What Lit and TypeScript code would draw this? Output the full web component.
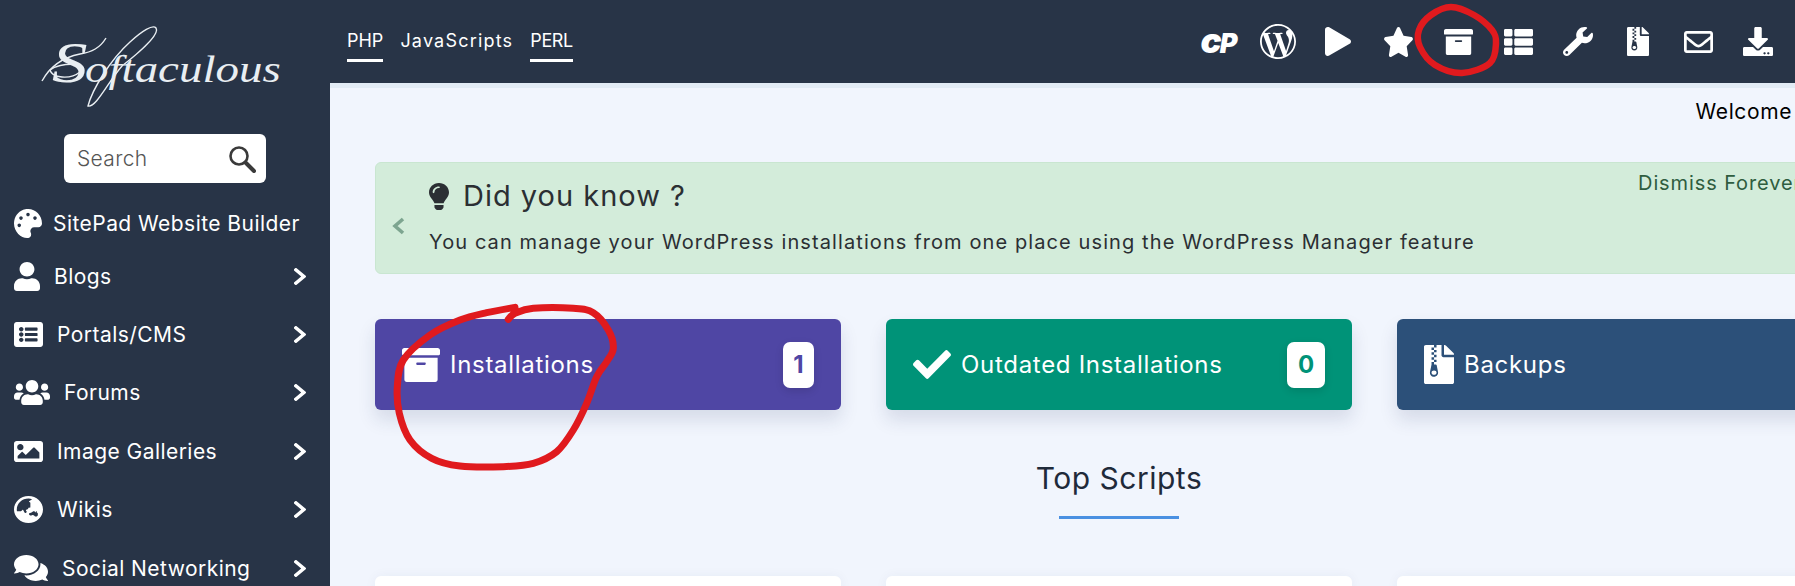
import { LitElement, html, css, svg } from "lit";
import { customElement } from "lit/decorators.js";

const P = {
  star: ["0 0 576 512", "M259.3 17.8L194 150.2 47.9 171.5c-26.2 3.8-36.7 36.1-17.7 54.6l105.7 103-25 145.5c-4.5 26.3 23.2 46 46.4 33.7L288 439.6l130.7 68.7c23.2 12.2 50.9-7.4 46.4-33.7l-25-145.5 105.7-103c19-18.5 8.5-50.8-17.7-54.6L382 150.2 316.7 17.8c-11.7-23.6-45.6-23.9-57.4 0z"],
  play: ["0 0 448 512", "M424.4 214.7L72.4 6.6C43.8-10.3 0 6.1 0 47.9V464c0 37.5 40.7 60.1 72.4 41.3l352-208c31.4-18.5 31.5-64.1 0-82.6z"],
  archive: ["0 32 512 448", "M32 448c0 17.7 14.3 32 32 32h384c17.7 0 32-14.3 32-32V160H32v288zm160-212c0-6.6 5.4-12 12-12h104c6.6 0 12 5.4 12 12v8c0 6.6-5.4 12-12 12H204c-6.6 0-12-5.4-12-12v-8zM480 32H32C14.3 32 0 46.3 0 64v48c0 8.8 7.2 16 16 16h480c8.8 0 16-7.2 16-16V64c0-17.7-14.3-32-32-32z"],
  thlist: ["0 32 512 448", "M149.333 216v80c0 13.255-10.745 24-24 24H24c-13.255 0-24-10.745-24-24v-80c0-13.255 10.745-24 24-24h101.333c13.255 0 24 10.745 24 24zM0 376v80c0 13.255 10.745 24 24 24h101.333c13.255 0 24-10.745 24-24v-80c0-13.255-10.745-24-24-24H24c-13.255 0-24 10.745-24 24zM125.333 32H24C10.745 32 0 42.745 0 56v80c0 13.255 10.745 24 24 24h101.333c13.255 0 24-10.745 24-24V56c0-13.255-10.745-24-24-24zm80 448H488c13.255 0 24-10.745 24-24v-80c0-13.255-10.745-24-24-24H205.333c-13.255 0-24 10.745-24 24v80c0 13.255 10.745 24 24 24zm-24-424v80c0 13.255 10.745 24 24 24H488c13.255 0 24-10.745 24-24V56c0-13.255-10.745-24-24-24H205.333c-13.255 0-24 10.745-24 24zm24 264H488c13.255 0 24-10.745 24-24v-80c0-13.255-10.745-24-24-24H205.333c-13.255 0-24 10.745-24 24v80c0 13.255 10.745 24 24 24z"],
  wrench: ["0 0 512 512", "M507.73 109.1c-2.24-9.03-13.54-12.09-20.12-5.51l-74.36 74.36-67.88-11.31-11.31-67.88 74.36-74.36c6.62-6.62 3.43-17.9-5.66-20.16-47.38-11.74-99.55.91-136.58 37.93-39.64 39.64-50.55 97.1-34.05 147.2L18.74 402.76c-24.99 24.99-24.99 65.51 0 90.5 24.99 24.99 65.51 24.99 90.5 0l213.21-213.21c50.12 16.71 107.47 5.68 147.37-34.22 37.07-37.07 49.7-89.32 37.91-136.73zM64 472c-13.25 0-24-10.75-24-24 0-13.26 10.75-24 24-24s24 10.74 24 24c0 13.25-10.75 24-24 24z"],
  envelope: ["0 64 512 384", "M464 64H48C21.49 64 0 85.49 0 112v288c0 26.51 21.49 48 48 48h416c26.51 0 48-21.49 48-48V112c0-26.51-21.49-48-48-48zm0 48v40.805c-22.422 18.259-58.168 46.651-134.587 106.49-16.841 13.247-50.201 45.072-73.413 44.701-23.208.375-56.579-31.459-73.413-44.701C106.18 199.465 70.425 171.067 48 152.805V112h416zM48 400V214.398c22.914 18.251 55.409 43.862 104.938 82.646 21.857 17.205 60.134 55.186 103.062 54.955 42.717.231 80.509-37.199 103.053-54.947 49.528-38.783 82.032-64.401 104.947-82.653V400H48z"],
  download: ["0 0 512 512", "M216 0h80c13.3 0 24 10.7 24 24v168h87.7c17.8 0 26.7 21.5 14.1 34.1L269.7 378.3c-7.5 7.5-19.8 7.5-27.3 0L90.1 226.1c-12.6-12.6-3.7-34.1 14.1-34.1H192V24c0-13.3 10.7-24 24-24zm296 376v112c0 13.3-10.7 24-24 24H24c-13.3 0-24-10.7-24-24V376c0-13.3 10.7-24 24-24h146.7l49 49c20.1 20.1 52.5 20.1 72.6 0l49-49H488c13.3 0 24 10.7 24 24zm-124 88c0-11-9-20-20-20s-20 9-20 20 9 20 20 20 20-9 20-20zm64 0c0-11-9-20-20-20s-20 9-20 20 9 20 20 20 20-9 20-20z"],
  check: ["0 64 512 384", "M173.898 439.404l-166.4-166.4c-9.997-9.997-9.997-26.206 0-36.204l36.203-36.204c9.997-9.998 26.207-9.998 36.204 0L192 312.69 432.095 72.596c9.997-9.997 26.207-9.997 36.204 0l36.203 36.204c9.997 9.997 9.997 26.206 0 36.204l-294.4 294.401c-9.998 9.997-26.207 9.997-36.204-.001z"],
  zip: ["0 0 384 512", "M377 105L279.1 7c-4.5-4.5-10.6-7-17-7H256v128h128v-6.1c0-6.3-2.5-12.4-7-16.9zM128.4 336c-17.9 0-32.4 12.1-32.4 27 0 15 14.6 27 32.5 27s32.4-12.1 32.4-27-14.6-27-32.5-27zM224 136V0h-63.6v32h-32V0H24C10.7 0 0 10.7 0 24v464c0 13.3 10.7 24 24 24h336c13.3 0 24-10.7 24-24V160H248c-13.2 0-24-10.8-24-24zM95.9 32h32v32h-32zm32.3 384c-33.2 0-58-30.4-51.4-62.9L96.4 256v-32h32v-32h-32v-32h32v-32h-32V96h32V64h32v32h-32v32h32v32h-32v32h32v32h-32v32h22.1c5.7 0 10.7 4.1 11.8 9.7l17.3 87.7c6.4 32.4-18.4 62.6-51.4 62.6z"],
  user: ["0 0 448 512", "M224 256c70.7 0 128-57.3 128-128S294.7 0 224 0 96 57.3 96 128s57.3 128 128 128zm89.6 32h-16.7c-22.2 10.2-46.9 16-72.9 16s-50.6-5.8-72.9-16h-16.7C60.2 288 0 348.2 0 422.4V464c0 26.5 21.5 48 48 48h352c26.5 0 48-21.5 48-48v-41.6c0-74.2-60.2-134.4-134.4-134.4z"],
  listalt: ["0 32 512 448", "M464 480H48c-26.51 0-48-21.49-48-48V80c0-26.51 21.49-48 48-48h416c26.51 0 48 21.49 48 48v352c0 26.51-21.49 48-48 48zM128 120c-22.091 0-40 17.909-40 40s17.909 40 40 40 40-17.909 40-40-17.909-40-40-40zm0 96c-22.091 0-40 17.909-40 40s17.909 40 40 40 40-17.909 40-40-17.909-40-40-40zm0 96c-22.091 0-40 17.909-40 40s17.909 40 40 40 40-17.909 40-40-17.909-40-40-40zm288-136v-32c0-6.627-5.373-12-12-12H204c-6.627 0-12 5.373-12 12v32c0 6.627 5.373 12 12 12h200c6.627 0 12-5.373 12-12zm0 96v-32c0-6.627-5.373-12-12-12H204c-6.627 0-12 5.373-12 12v32c0 6.627 5.373 12 12 12h200c6.627 0 12-5.373 12-12zm0 96v-32c0-6.627-5.373-12-12-12H204c-6.627 0-12 5.373-12 12v32c0 6.627 5.373 12 12 12h200c6.627 0 12-5.373 12-12z"],
  users: ["0 32 640 448", "M96 224c35.3 0 64-28.7 64-64s-28.7-64-64-64-64 28.7-64 64 28.7 64 64 64zm448 0c35.3 0 64-28.7 64-64s-28.7-64-64-64-64 28.7-64 64 28.7 64 64 64zm32 32h-64c-17.6 0-33.5 7.1-45.1 18.6 40.3 22.1 68.9 62 75.1 109.4h66c17.7 0 32-14.3 32-32v-32c0-35.3-28.7-64-64-64zm-256 0c61.9 0 112-50.1 112-112S381.9 32 320 32 208 82.1 208 144s50.1 112 112 112zm76.8 32h-8.3c-20.8 10-43.9 16-68.5 16s-47.6-6-68.5-16h-8.3C179.6 288 128 339.6 128 403.2V432c0 26.5 21.5 48 48 48h288c26.5 0 48-21.5 48-48v-28.8c0-63.6-51.6-115.2-115.2-115.2zm-223.7-13.4C161.5 263.1 145.6 256 128 256H64c-35.3 0-64 28.7-64 64v32c0 17.7 14.3 32 32 32h65.9c6.3-47.4 34.9-87.3 75.2-109.4z"],
  image: ["0 64 512 384", "M464 448H48c-26.51 0-48-21.49-48-48V112c0-26.51 21.49-48 48-48h416c26.51 0 48 21.49 48 48v288c0 26.51-21.49 48-48 48zM112 120c-30.928 0-56 25.072-56 56s25.072 56 56 56 56-25.072 56-56-25.072-56-56-56zM64 384h384V272l-87.515-87.515c-4.686-4.686-12.284-4.686-16.971 0L208 320l-55.515-55.515c-4.686-4.686-12.284-4.686-16.971 0L64 336v48z"],
  globe: ["0 8 496 496", "M248 8C111.03 8 0 119.03 0 256s111.03 248 248 248 248-111.03 248-248S384.97 8 248 8zm-11.34 240.23c-2.89 4.82-8.1 7.77-13.72 7.77h-.31c-4.24 0-8.31 1.69-11.31 4.69l-5.66 5.66c-3.12 3.12-3.12 8.19 0 11.31l5.66 5.66c3 3 4.69 7.07 4.69 11.31V304c0 8.84-7.16 16-16 16h-6.11c-6.06 0-11.6-3.42-14.31-8.85l-22.62-45.23c-2.44-4.88-8.95-5.94-12.81-2.08l-19.47 19.46c-3 3-7.07 4.69-11.31 4.69H50.81C49.12 277.55 48 266.92 48 256c0-110.28 89.72-200 200-200 21.51 0 42.2 3.51 61.63 9.82l-50.16 38.53c-5.11 3.41-4.63 11.06.86 13.81l10.83 5.41c5.42 2.71 8.84 8.25 8.84 14.31V216c0 4.42-3.58 8-8 8h-3.06c-3.03 0-5.8-1.71-7.15-4.42-1.56-3.12-5.96-3.29-7.76-.3l-17.37 28.95zM408 358.43c0 4.24-1.69 8.31-4.69 11.31l-9.57 9.57c-3 3-7.07 4.69-11.31 4.69h-15.16c-4.24 0-8.31-1.69-11.31-4.69l-13.01-13.01a26.767 26.767 0 0 0-25.42-7.04l-21.27 5.32c-1.27.32-2.57.48-3.88.48h-10.34c-4.24 0-8.31-1.69-11.31-4.69l-11.91-11.91a8.008 8.008 0 0 1-2.34-5.66v-10.2c0-3.27 1.99-6.21 5.03-7.43l39.34-15.74c1.98-.79 3.86-1.82 5.59-3.05l23.71-16.89a7.978 7.978 0 0 1 4.64-1.48h12.09c3.23 0 6.15 1.94 7.39 4.93l5.35 12.85a4 4 0 0 0 3.69 2.46h3.8c1.78 0 3.35-1.18 3.84-2.88l4.2-14.47c.5-1.71 2.06-2.88 3.84-2.88h6.06c2.21 0 4 1.79 4 4v12.93c0 2.12.84 4.16 2.34 5.66l11.91 11.91c3 3 4.69 7.07 4.69 11.31v24.6z"],
  comments: ["0 32 576 448", "M416 192c0-88.4-93.1-160-208-160S0 103.6 0 192c0 34.3 14.1 65.9 38 92-13.4 30.2-35.5 54.2-35.8 54.5-2.2 2.3-2.8 5.7-1.5 8.7S4.8 352 8 352c36.6 0 66.9-12.3 88.7-25 32.2 15.7 70.3 25 111.3 25 114.9 0 208-71.6 208-160zm122 220c23.9-26 38-57.7 38-92 0-66.9-53.5-124.2-129.3-148.1.9 6.6 1.3 13.3 1.3 20.1 0 105.9-107.7 192-240 192-10.8 0-21.3-.8-31.7-1.9C207.8 439.6 281.8 480 368 480c41 0 79.1-9.2 111.3-25 21.8 12.7 52.1 25 88.7 25 3.2 0 6.1-1.9 7.3-4.8 1.3-2.9.7-6.3-1.5-8.7-.3-.3-22.4-24.2-35.8-54.5z"],
  palette: ["0 0 512 512", "M204.3 5C104.9 24.4 24.8 104.3 5.2 203.4c-37 187 131.7 326.4 258.8 306.7 41.2-6.4 61.4-54.6 42.5-91.7-23.1-45.4 9.9-98.4 60.9-98.4h79.7c35.8 0 64.8-29.6 64.9-65.3C511.5 97.1 368.1-26.9 204.3 5zM96 320c-17.7 0-32-14.3-32-32s14.3-32 32-32 32 14.3 32 32-14.3 32-32 32zm32-128c-17.7 0-32-14.3-32-32s14.3-32 32-32 32 14.3 32 32-14.3 32-32 32zm128-64c-17.7 0-32-14.3-32-32s14.3-32 32-32 32 14.3 32 32-14.3 32-32 32zm128 64c-17.7 0-32-14.3-32-32s14.3-32 32-32 32 14.3 32 32-14.3 32-32 32z"],
  chevron: ["34 37 258 438", "M285.476 272.971L91.132 467.314c-9.373 9.373-24.569 9.373-33.941 0l-22.667-22.667c-9.357-9.357-9.375-24.522-.04-33.901L188.505 256 34.484 101.255c-9.335-9.379-9.317-24.544.04-33.901l22.667-22.667c9.373-9.373 24.569-9.373 33.941 0L285.475 239.03c9.373 9.372 9.373 24.568.001 33.941z"],
  bulb: ["0 0 352 512", "M96.06 454.35c.01 6.29 1.87 12.45 5.36 17.69l17.09 25.69a31.99 31.99 0 0 0 26.64 14.28h61.71a31.99 31.99 0 0 0 26.64-14.28l17.09-25.69a31.989 31.989 0 0 0 5.36-17.69l.04-38.35H96.01l.05 38.35zM0 176c0 44.37 16.45 84.85 43.56 115.78 16.52 18.85 42.36 58.23 52.21 91.45.04.26.07.52.11.78h160.24c.04-.26.07-.51.11-.78 9.85-33.22 35.69-72.6 52.21-91.45C335.55 260.85 352 220.37 352 176 352 78.61 272.91-.3 175.45 0 73.44.31 0 82.97 0 176zm176-80c-44.11 0-80 35.89-80 80 0 8.84-7.16 16-16 16s-16-7.16-16-16c0-61.76 50.24-112 112-112 8.84 0 16 7.16 16 16s-7.16 16-16 16z"],
  wp: ["8 8 496 496", "M256 8C119.3 8 8 119.2 8 256c0 136.7 111.3 248 248 248s248-111.3 248-248C504 119.2 392.7 8 256 8zM33 256c0-32.3 6.9-63 19.3-90.7l106.4 291.4C84.3 420.5 33 344.2 33 256zm223 223c-21.9 0-43-3.2-63-9.1l66.9-194.4 68.5 187.8c.5 1.1 1 2.1 1.6 3.1-23.1 8.1-48 12.6-74 12.6zm30.7-327.5c13.4-.7 25.5-2.1 25.5-2.1 12-1.4 10.6-19.1-1.4-18.4 0 0-36.1 2.8-59.4 2.8-21.9 0-58.7-2.8-58.7-2.8-12-.7-13.4 17.7-1.4 18.4 0 0 11.4 1.4 23.4 2.1l34.7 95.2L200.6 393l-81.2-241.5c13.4-.7 25.5-2.1 25.5-2.1 12-1.4 10.6-19.1-1.4-18.4 0 0-36.1 2.8-59.4 2.8-4.2 0-9.1-.1-14.4-.3C109.6 73 178.1 33 256 33c58 0 110.9 22.2 150.6 58.5-1-.1-1.9-.2-2.9-.2-21.9 0-37.4 19.1-37.4 39.6 0 18.4 10.6 33.9 21.9 52.3 8.5 14.8 18.4 33.9 18.4 61.5 0 19.1-7.3 41.2-17 72.1l-22.2 74.3-80.7-239.6zm81.4 297.2l68.1-196.9c12.7-31.8 17-57.2 17-79.9 0-8.2-.5-15.8-1.5-22.9 17.4 31.8 27.3 68.2 27.3 107 0 82.3-44.6 154.1-110.9 192.7z"],
} as const;

const icon = (k: keyof typeof P, w: number, h: number) =>
  html`<svg class="ic" width=${w} height=${h} viewBox=${P[k][0]} preserveAspectRatio="none" fill="currentColor"><path d=${P[k][1]}></path></svg>`;

const NAV: [string, keyof typeof P, number, number, boolean][] = [
  ["SitePad Website Builder", "palette", 28, 29, false],
  ["Blogs", "user", 26, 29, true],
  ["Portals/CMS", "listalt", 29, 25, true],
  ["Forums", "users", 36, 25, true],
  ["Image Galleries", "image", 29, 21, true],
  ["Wikis", "globe", 29, 27, true],
  ["Social Networking", "comments", 34, 26, true],
];

const TOP: [keyof typeof P, number, number][] = [
  ["wp", 36, 35], ["play", 26, 29], ["star", 31, 30], ["archive", 29, 26], ["thlist", 29, 26],
  ["wrench", 30, 29], ["zip", 22, 29], ["envelope", 29, 22], ["download", 30, 29],
];

function smooth(pts: number[][], closed = false): string {
  const n = pts.length;
  const at = (i: number) => (closed ? pts[(i + n) % n] : pts[Math.max(0, Math.min(n - 1, i))]);
  let d = `M${pts[0][0]} ${pts[0][1]}`;
  const end = closed ? n : n - 1;
  for (let i = 0; i < end; i++) {
    const [p0, p1, p2, p3] = [at(i - 1), at(i), at(i + 1), at(i + 2)];
    d += `C${(p1[0] + (p2[0] - p0[0]) / 6).toFixed(1)} ${(p1[1] + (p2[1] - p0[1]) / 6).toFixed(1)} ${(p2[0] - (p3[0] - p1[0]) / 6).toFixed(1)} ${(p2[1] - (p3[1] - p1[1]) / 6).toFixed(1)} ${p2[0].toFixed(1)} ${p2[1].toFixed(1)}`;
  }
  return d;
}

const BIG = [[465,52],[380,68],[300,90],[210,135],[130,210],[112,290],[118,370],[150,450],[215,505],[300,528],[430,530],[520,520],[590,485],[640,420],[680,340],[710,260],[740,215],[760,175],[745,120],[700,68],[640,55],[520,55],[465,70],[445,88]]
  .map(([x, y]) => [360 + x / 3, 290 + y / 3]);
const SMALL = [[1431,15],[1451,7],[1474,15],[1492,30],[1496,43],[1490,63],[1462,73],[1435,65],[1420,47],[1419,30]];

@customElement("app-root")
export class AppRoot extends LitElement {
  static styles = css`
    :host { display: flex; position: relative; width: 1795px; height: 586px; overflow: hidden; background: #f1f5fd; font-family: Inter, "Open Sans", sans-serif; color: #222; }
    .ic { display: block; flex: none; }
    .side { width: 330px; flex: none; background: #283447; color: #fff; display: flex; flex-direction: column; position: relative; z-index: 2; }
    .logo { height: 134px; flex: none; position: relative; box-sizing: border-box; padding: 43px 0 0 52px; color: #e9eef2; }
    .word { font: italic 400 37px/40px "Liberation Serif", serif; display: block; white-space: nowrap; transform: scaleX(1.27); transform-origin: left center; }
    .word b { font-weight: 400; font-size: 56px; margin-right: -2px; }
    .flourish { position: absolute; left: 0; top: 0; }
    .search { width: 202px; height: 49px; flex: none; margin: 0 auto 16px; box-sizing: border-box; background: #fff; border-radius: 6px; display: flex; align-items: center; justify-content: space-between; padding: 0 10px 0 13px; color: #555; font-size: 21px; letter-spacing: .35px; font-weight: 300; }
    .row { height: 58.4px; display: flex; align-items: center; gap: 14px; padding: 0 24px 0 14px; font-size: 21px; letter-spacing: .45px; flex: none; white-space: nowrap; }
    .row.first { height: 48px; gap: 11px; }
    .row .chev { margin-left: auto; }
    .main { flex: 1; min-width: 0; display: flex; flex-direction: column; overflow: hidden; }
    .top { height: 83px; flex: none; background: #283447; display: flex; align-items: center; justify-content: space-between; padding: 0 7px 0 17px; color: #fff; box-shadow: 0 5px 0 #e2ebf5; position: relative; }
    .tabs { display: flex; gap: 17px; font-size: 18px; align-self: flex-start; padding-top: 29px; }
    .tab { height: 33px; box-sizing: border-box; line-height: 24px; }
    .tab.on { border-bottom: 3px solid #fff; }
    .tab.js { letter-spacing: 1.2px; }
    .tab.pl { letter-spacing: -.4px; }
    .tools { display: flex; }
    .tool { width: 60px; height: 40px; display: flex; align-items: center; justify-content: center; }
    .cp { font: italic 900 27px/40px Inter, sans-serif; letter-spacing: -2px; color: #fff; }
    .cp i { font-size: 35px; }
    .wrap { width: 1488px; margin-left: 45px; display: flex; flex-direction: column; flex: none; }
    .welcome { height: 79px; box-sizing: border-box; padding: 17px 71px 0 0; text-align: right; font-size: 21px; letter-spacing: .6px; line-height: 24px; color: #000; flex: none; }
    .alert { height: 112px; box-sizing: border-box; background: #d3ecda; border: 1px solid #c9e6d1; border-radius: 6px; display: flex; align-items: flex-start; flex: none; }
    .back { color: #7da590; margin: 54px 24px 0 15px; }
    .a-body { flex: 1; padding-top: 14px; }
    .a-top { display: flex; justify-content: space-between; align-items: flex-start; padding-right: 60px; }
    .title { display: flex; align-items: center; gap: 14px; font-size: 29px; letter-spacing: 1px; line-height: 38px; color: #2b2f33; }
    .dismiss { font-size: 20px; letter-spacing: .9px; line-height: 22px; color: #2f5d3f; margin-top: -5px; }
    .a-text { margin-top: 12px; font-size: 20px; letter-spacing: 1.1px; line-height: 30px; color: #2b2f33; white-space: nowrap; }
    .grid { display: grid; grid-template-columns: repeat(3, 1fr); gap: 45px; flex: none; }
    .stats { margin-top: 45px; }
    .card { height: 91px; box-sizing: border-box; border-radius: 6px; color: #fff; display: flex; align-items: center; padding: 0 27px; gap: 10px; font-size: 24px; letter-spacing: .7px; box-shadow: 0 10px 18px rgba(30, 50, 90, .13); }
    .purple { background: #4f46a4; }
    .green { background: #009378; }
    .navy { background: #2c5079; }
    .badge { margin-left: auto; background: #fff; border-radius: 7px; height: 46px; display: flex; align-items: center; justify-content: center; font-weight: 700; font-size: 24px; letter-spacing: 0; box-shadow: 0 3px 8px rgba(0, 0, 0, .12); }
    .b1 { width: 31px; color: #4f46a4; }
    .b0 { width: 38px; color: #009378; }
    h2 { margin: 46px 0 0; font-weight: 400; font-size: 30px; letter-spacing: .5px; line-height: 44px; text-align: center; color: #1f2a3a; }
    .rule { width: 120px; height: 3px; background: #4a90e2; margin: 16px auto 0; flex: none; }
    .scripts { margin-top: 57px; }
    .blank { height: 100px; background: #fff; border-radius: 6px; box-shadow: 0 0 12px rgba(30, 50, 90, .05); }
    .ink { position: absolute; inset: 0; pointer-events: none; z-index: 5; }
  `;

  render() {
    return html`
      <aside class="side">
        <div class="logo">
          <span class="word"><b>S</b>oftaculous</span>
          <svg class="flourish" width="330" height="134" fill="none" stroke="#e9eef2" stroke-width="1.4">
            <path d="M88 106C92 90 110 60 130 42C142 31 153 24 156 28C160 34 140 52 122 66C108 82 96 108 88 106Z"></path>
            <path d="M42 81C48 70 60 58 80 54C92 52 100 48 106 38"></path>
            <path d="M50 70C60 62 90 62 80 72C70 80 52 78 50 70Z"></path>
          </svg>
        </div>
        <div class="search">
          <span>Search</span>
          <svg width="28" height="28" viewBox="0 0 28 28" fill="none" stroke="#3a3a3a"><circle cx="11" cy="11" r="8.5" stroke-width="2.6"></circle><path d="M17.5 17.5L26 26" stroke-width="4" stroke-linecap="round"></path></svg>
        </div>
        ${NAV.map(([t, k, w, h, c], i) => html`
          <div class="row ${i === 0 ? "first" : ""}">${icon(k, w, h)}<span>${t}</span>${c ? html`<span class="chev">${icon("chevron", 12, 17)}</span>` : ""}</div>`)}
      </aside>
      <div class="main">
        <header class="top">
          <nav class="tabs"><span class="tab on">PHP</span><span class="tab js">JavaScripts</span><span class="tab on pl">PERL</span></nav>
          <div class="tools">
            <span class="tool"><span class="cp"><i>c</i>P</span></span>
            ${TOP.map(([k, w, h]) => html`<span class="tool">${icon(k, w, h)}</span>`)}
          </div>
        </header>
        <div class="wrap">
          <div class="welcome">Welcome</div>
          <section class="alert">
            <svg class="back ic" width="14" height="18" viewBox="0 0 14 18" fill="none" stroke="currentColor" stroke-width="3.6"><path d="M12 2L4 9l8 7"></path></svg>
            <div class="a-body">
              <div class="a-top">
                <div class="title">${icon("bulb", 20, 27)}<span>Did you know ?</span></div>
                <div class="dismiss">Dismiss Forever</div>
              </div>
              <div class="a-text">You can manage your WordPress installations from one place using the WordPress Manager feature</div>
            </div>
          </section>
          <div class="grid stats">
            <div class="card purple">${icon("archive", 38, 34)}<span>Installations</span><span class="badge b1">1</span></div>
            <div class="card green">${icon("check", 38, 29)}<span>Outdated Installations</span><span class="badge b0">0</span></div>
            <div class="card navy">${icon("zip", 30, 39)}<span>Backups</span></div>
          </div>
          <h2>Top Scripts</h2>
          <div class="rule"></div>
          <div class="grid scripts"><div class="blank"></div><div class="blank"></div><div class="blank"></div></div>
        </div>
      </div>
      <svg class="ink" width="1795" height="586" fill="none" stroke="#e01a1e" stroke-linecap="round" stroke-linejoin="round">
        ${svg`<path d=${smooth(BIG)} stroke-width="7"></path><path d=${smooth(SMALL, true)} stroke-width="6.5"></path>`}
      </svg>
    `;
  }
}
